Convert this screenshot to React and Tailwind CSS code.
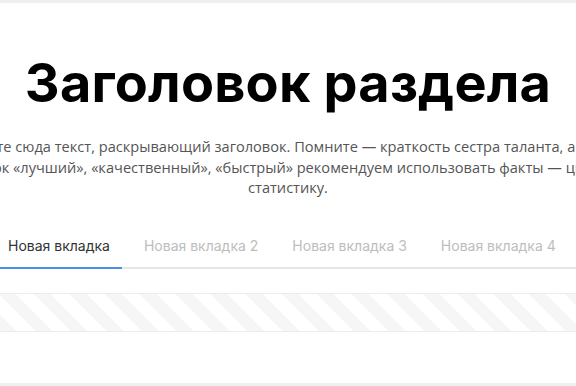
import React, { useState } from 'react';

const tabs = ['Новая вкладка', 'Новая вкладка 2', 'Новая вкладка 3', 'Новая вкладка 4'];

const lines = [
  { text: 'Напишите сюда текст, раскрывающий заголовок. Помните — краткость сестра таланта, а вместо', pad: 'pr-[10px]' },
  { text: 'оценок «лучший», «качественный», «быстрый» рекомендуем использовать факты — цифры,', pad: '' },
  { text: 'статистику.', pad: '' },
];

const Tabs = () => {
  const [active, setActive] = useState(0);

  return (
    <div className="flex gap-[10px] border-b-2 border-[#e6e6e6]">
      {tabs.map((tab, idx) => (
        <button
          key={tab}
          type="button"
          onClick={() => setActive(idx)}
          className={
            idx === active
              ? 'shrink-0 px-[12px] pt-[8px] pb-[11px] -mb-[2px] border-b-2 border-[#4a8fe8] text-[#333] text-[14px] font-["Inter",sans-serif]'
              : 'shrink-0 px-[12px] pt-[8px] pb-[11px] -mb-[2px] border-b-2 border-transparent text-[#bdbdbd] text-[14px] font-["Inter",sans-serif]'
          }
        >
          {tab}
        </button>
      ))}
    </div>
  );
};

const App = () => (
  <div className="w-[576px] h-[386px] overflow-hidden bg-white flex flex-col">
    <div className="h-[3px] bg-[#efefef] shrink-0" />
    <section className="flex flex-col items-center pt-[49px]">
      <h1 className="text-[54px] leading-[62px] font-bold text-black font-['Inter',sans-serif] whitespace-nowrap tracking-[0.2px]">
        Заголовок раздела
      </h1>
      <div className="mt-[22px] w-[576px] flex flex-col items-center text-[14.6px] leading-[20.5px] text-[#555] font-['Open_Sans',sans-serif]">
        {lines.map((line) => (
          <p key={line.text} className={`whitespace-nowrap ${line.pad}`}>
            {line.text}
          </p>
        ))}
      </div>
    </section>
    <div className="mt-[29px] -ml-[4px] w-[580px]">
      <Tabs />
    </div>
    <div className="mt-[24px] h-[39px] border-y border-[#ececec] bg-[repeating-linear-gradient(45deg,#f6f6f6_0,#f6f6f6_12px,#ffffff_12px,#ffffff_25px)]" />
    <div className="flex-1" />
    <div className="h-[3px] bg-[#efefef] shrink-0" />
  </div>
);

export default App;
